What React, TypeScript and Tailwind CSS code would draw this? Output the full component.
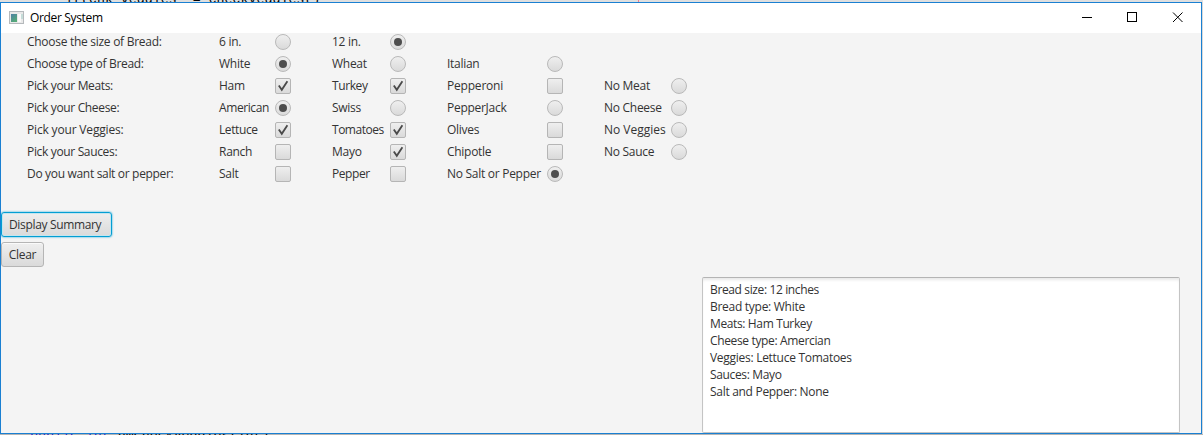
import React from "react";

type Kind = "radio" | "check";
interface Choice {
  label: string;
  kind: Kind;
  on?: boolean;
  fit?: string;
}
interface Row {
  title: string;
  fit?: string;
  choices: Choice[];
}

const rows: Row[] = [
  { title: "Choose the size of Bread:", choices: [{ label: "6 in.", kind: "radio" }, { label: "12 in.", kind: "radio", on: true }] },
  { title: "Choose type of Bread:", fit: "tracking-[-0.32px]", choices: [{ label: "White", kind: "radio", on: true }, { label: "Wheat", kind: "radio" }, { label: "Italian", kind: "radio" }] },
  { title: "Pick your Meats:", fit: "tracking-[-0.34px]", choices: [{ label: "Ham", kind: "check", on: true }, { label: "Turkey", kind: "check", on: true, fit: "tracking-[-0.4px]" }, { label: "Pepperoni", kind: "check", fit: "tracking-[-0.2px]" }, { label: "No Meat", kind: "radio" }] },
  { title: "Pick your Cheese:", fit: "tracking-[-0.34px]", choices: [{ label: "American", kind: "radio", on: true, fit: "tracking-[-0.4px]" }, { label: "Swiss", kind: "radio" }, { label: "PepperJack", kind: "radio" }, { label: "No Cheese", kind: "radio" }] },
  { title: "Pick your Veggies:", fit: "tracking-[-0.17px]", choices: [{ label: "Lettuce", kind: "check", on: true, fit: "tracking-[-0.4px]" }, { label: "Tomatoes", kind: "check", on: true, fit: "tracking-[-0.48px]" }, { label: "Olives", kind: "check" }, { label: "No Veggies", kind: "radio", fit: "tracking-[-0.02px]" }] },
  { title: "Pick your Sauces:", fit: "tracking-[-0.34px]", choices: [{ label: "Ranch", kind: "check" }, { label: "Mayo", kind: "check", on: true }, { label: "Chipotle", kind: "check" }, { label: "No Sauce", kind: "radio" }] },
  { title: "Do you want salt or pepper:", fit: "tracking-[-0.32px]", choices: [{ label: "Salt", kind: "check" }, { label: "Pepper", kind: "check", fit: "tracking-[-0.42px]" }, { label: "No Salt or Pepper", kind: "radio", on: true }] },
];

const summary: { text: string; fit?: string }[] = [
  { text: "Bread size: 12 inches", fit: "tracking-[-0.37px]" },
  { text: "Bread type: White" },
  { text: "Meats: Ham Turkey", fit: "tracking-[-0.37px]" },
  { text: "Cheese type: Amercian", fit: "tracking-[-0.35px]" },
  { text: "Veggies: Lettuce Tomatoes" },
  { text: "Sauces: Mayo", fit: "tracking-[-0.35px]" },
  { text: "Salt and Pepper: None", fit: "tracking-[-0.3px]" },
];

function Control({ kind, on }: { kind: Kind; on?: boolean }) {
  if (kind === "radio") {
    return (
      <span className="flex size-4 items-center justify-center rounded-full border border-[#b9b9b9] bg-linear-to-b from-[#efefef] to-[#dadada]">
        {on && <span className="size-2 rounded-full bg-[#4d4d4d]" />}
      </span>
    );
  }
  return (
    <span className="flex size-4 items-center justify-center rounded-xs border border-[#b5b5b5] bg-linear-to-b from-[#efefef] to-[#dadada]">
      {on && (
        <svg viewBox="0 0 14 14" className="size-3.5" fill="none" stroke="#4a4a4a" strokeWidth="1.8">
          <path d="M2.8 6.4 L5.8 10.8 L11.4 2.2" />
        </svg>
      )}
    </span>
  );
}

export default function App() {
  return (
    <div className="flex h-[435px] w-[1203px] flex-col overflow-hidden bg-[#d9d9d9] font-['Open_Sans','Noto_Sans',sans-serif] text-[12px] tracking-[-0.28px] whitespace-nowrap text-[#333]">
      <div className="flex h-[2px] shrink-0 items-end overflow-hidden bg-[#dfdfdf] pl-[65px]">
        <pre className="-mb-[5px] w-[573px] font-['Liberation_Mono',monospace] text-[13.3px] leading-[15px] tracking-normal text-black">if(chk_veggies_ = checkVeggies()</pre>
        <span className="h-[2px] w-px bg-[#f08090]" />
      </div>
      <div className="flex h-[432px] w-[1202px] shrink-0 flex-col border border-[#1a80d2] bg-[#f4f4f4]">
        <header className="flex h-[30px] shrink-0 items-center bg-white pl-2 text-black">
          <svg width="16" height="14" viewBox="0 0 16 14" className="mr-[5px]">
            <defs>
              <linearGradient id="pane" x2="0.6" y2="1">
                <stop stopColor="#4d80a5" />
                <stop offset="1" stopColor="#55aa77" />
              </linearGradient>
            </defs>
            <rect x="0.5" y="0.5" width="14" height="12" fill="#e9e9e9" stroke="#b5b9bc" />
            <rect x="2" y="3" width="6" height="8" fill="url(#pane)" />
            <rect x="9" y="3" width="3" height="8" fill="#fafafa" />
            <rect x="12" y="3" width="2" height="5" fill="#c5dcd8" />
          </svg>
          <span className="flex-1 tracking-[-0.34px]">Order System</span>
          <svg width="103" height="12" viewBox="0 0 103 12" className="mr-[17px]" fill="none" stroke="#000">
            <path d="M1 5.5h10" />
            <rect x="46.5" y="0.5" width="9" height="9" />
            <path d="M92 0.5 L101.5 10 M101.5 0.5 L92 10" />
          </svg>
        </header>
        <main className="flex min-h-0 flex-1 flex-col">
          <div className="flex flex-col gap-1 pl-[26px]">
            {rows.map((row) => (
              <div key={row.title} className="grid h-[18px] grid-cols-[192px_56px_57px_58px_57px_100px_57px_67px_16px] items-center">
                <span className={row.fit}>{row.title}</span>
                {row.choices.map((c) => (
                  <React.Fragment key={c.label}>
                    <span className={c.fit}>{c.label}</span>
                    <Control kind={c.kind} on={c.on} />
                  </React.Fragment>
                ))}
              </div>
            ))}
          </div>
          <div className="mt-[29px] flex flex-col items-start gap-[5px]">
            <button className="h-[25px] w-[111px] rounded-[3px] border border-[#039ed3] bg-linear-to-b from-[#eeeeee] to-[#dadada] pl-[7px] text-left tracking-[-0.34px] shadow-[0_0_2px_#039ed3,inset_0_0_0_1px_#c4e5ef]">Display Summary</button>
            <button className="h-[25px] w-[43px] rounded-[3px] border border-[#b5b5b5] bg-linear-to-b from-[#efefef] to-[#dadada] shadow-[inset_0_1px_0_#fafafa]">Clear</button>
          </div>
          <div className="mt-[10px] mr-[21px] h-[156px] w-[478px] shrink-0 self-end rounded-xs border border-[#c4c4c4] border-t-[#b4b4b4] bg-white pt-[3px] pl-[7px] leading-[17px] shadow-[inset_0_3px_3px_-1px_#e8e8e8]">
            {summary.map((line) => (
              <div key={line.text} className={line.fit}>{line.text}</div>
            ))}
          </div>
        </main>
      </div>
      <div className="h-px shrink-0 overflow-hidden bg-[#b5b5b5] pl-[30px]">
        <pre className="-mt-[6px] font-['Liberation_Mono',monospace] text-[13.3px] leading-[15px] tracking-normal text-black"><span className="text-[#2222cc]">public int</span> hmCheckVeggies(int)</pre>
      </div>
    </div>
  );
}
